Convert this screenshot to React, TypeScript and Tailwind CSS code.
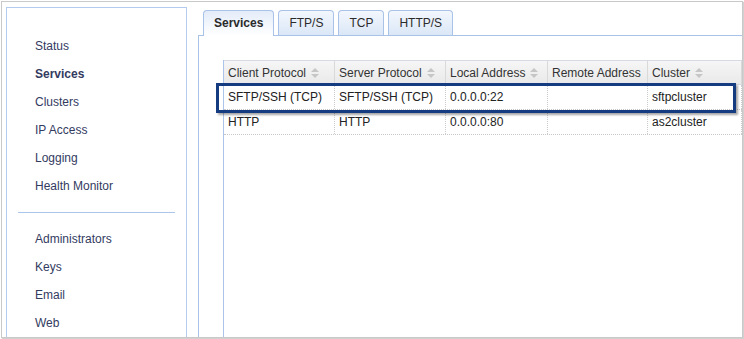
const navTop = ["Status", "Services", "Clusters", "IP Access", "Logging", "Health Monitor"];
const navBottom = ["Administrators", "Keys", "Email", "Web"];
const tabs = ["Services", "FTP/S", "TCP", "HTTP/S"];

const columns = [
    {label: "Client Protocol", w: "w-[111px]", sort: true},
    {label: "Server Protocol", w: "w-[111px]", sort: true},
    {label: "Local Address", w: "w-[102px]", sort: true},
    {label: "Remote Address", w: "w-[100px]", sort: false},
    {label: "Cluster", w: "flex-1", sort: true},
];

const rows = [
    ["SFTP/SSH (TCP)", "SFTP/SSH (TCP)", "0.0.0.0:22", "", "sftpcluster"],
    ["HTTP", "HTTP", "0.0.0.0:80", "", "as2cluster"],
];

const SortIcon = () => (
    <svg width="8" height="10" viewBox="0 0 8 10" className="ml-[5px] shrink-0">
        <path d="M0 4 L4 0 L8 4 Z" fill="#c6c6c6"/>
        <path d="M0 6 L4 10 L8 6 Z" fill="#c6c6c6"/>
    </svg>
);

const App = () => {
    return (
        <div className="w-[744px] h-[339px] bg-white overflow-hidden text-[12px]"
             style={{fontFamily: '"Liberation Sans", Arial, sans-serif'}}>
            <div className="ml-px mt-px w-[742px] h-[337px] border border-[#c9c9c9] shadow-[1px_1px_1px_rgba(0,0,0,0.18)] flex overflow-hidden pl-[4px]">
                {/* Sidebar */}
                <div className="mt-[5px] w-[181px] shrink-0 border-l border-t border-r border-[#b3cbee] pt-[24px] text-[#333b5f]">
                    {navTop.map((item) => (
                        <div key={item}
                             className={`pl-[28px] h-[28px] leading-[28px] ${item === "Services" ? "font-bold" : ""}`}>
                            {item}
                        </div>
                    ))}
                    <div className="mx-[11px] mt-[12px] mb-[12px] h-px bg-[#abc6ec]"/>
                    {navBottom.map((item) => (
                        <div key={item} className="pl-[28px] h-[28px] leading-[28px]">
                            {item}
                        </div>
                    ))}
                </div>

                {/* Main */}
                <div className="ml-[11px] flex-1 flex flex-col pt-[7px]">
                    <div className="flex items-end gap-[4px] pl-[5px] h-[26px]">
                        {tabs.map((tab) => (
                            tab === "Services" ? (
                                <div key={tab}
                                     className="relative z-10 h-[26px] -mb-px px-[10px] border border-b-0 border-[#a9c3e8] rounded-t-[4px] bg-gradient-to-b from-[#e4ecf9] to-white font-bold text-[#2b2b2b] leading-[24px]">
                                    {tab}
                                </div>
                            ) : (
                                <div key={tab}
                                     className="h-[25px] px-[10px] border border-b-0 border-[#a9c3e8] rounded-t-[4px] bg-gradient-to-b from-[#f3f7fd] to-[#dbe7f7] text-[#2b2b2b] leading-[24px]">
                                    {tab}
                                </div>
                            )
                        ))}
                    </div>
                    <div className="flex-1 border-l border-t border-[#a9c3e8] bg-white pl-[24px] pt-[24px] flex">
                        {/* Table */}
                        <div className="relative flex-1 border-l border-[#aac4ea]">
                            <div className="flex h-[25px] border-t border-b border-[#d6dbe3] bg-gradient-to-b from-[#f6f6f6] to-[#e9e9e9] text-[#333]">
                                {columns.map((c) => (
                                    <div key={c.label}
                                         className={`${c.w} shrink-0 flex items-center pl-[4px] border-r border-[#d9d9d9]`}>
                                        <span>{c.label}</span>
                                        {c.sort && <SortIcon/>}
                                    </div>
                                ))}
                            </div>
                            {rows.map((r, i) => (
                                <div key={i} className="flex h-[25px] border-b border-dotted border-[#c8c8c8] text-[#222]">
                                    {r.map((cell, j) => (
                                        <div key={j}
                                             className={`${columns[j].w} shrink-0 flex items-center pl-[4px] border-r border-dotted border-[#cccccc]`}>
                                            {cell}
                                        </div>
                                    ))}
                                </div>
                            ))}

                            {/* highlight around first row */}
                            <div className="absolute left-[-8px] top-[23px] w-[520px] h-[30px] border-[3px] border-[#153c80] shadow-[2px_2px_2px_rgba(0,0,0,0.35)]"/>
                        </div>
                    </div>
                </div>
            </div>
        </div>
    );
};

export default App;
